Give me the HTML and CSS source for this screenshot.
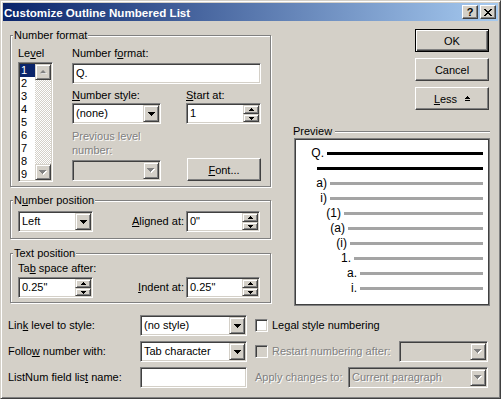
FILE: index.html
```html
<!DOCTYPE html>
<html lang="en">
<head>
    <meta charset="UTF-8">
    <meta name="viewport" content="width=device-width, initial-scale=1.0">
    <link rel="stylesheet" href="styles.css">
    <title>Customize Outline Numbered List</title>
</head>
<body>

<div class="window">
    <div class="titlebar">
        <span class="title">Customize Outline Numbered List</span>
        <span class="cbtn help">?</span>
        <span class="cbtn close">
            <svg width="8" height="7" viewBox="0 0 8 7"><path d="M0 0h2v1H0zM6 0h2v1H6zM1 1h2v1H1zM5 1h2v1H5zM2 2h4v1H2zM3 3h2v1H3zM2 4h4v1H2zM1 5h2v1H1zM5 5h2v1H5zM0 6h2v1H0zM6 6h2v1H6z" fill="#000"/></svg>
        </span>
    </div>

    <div class="top">
        <div class="left">

            <div class="group nf">
                <div class="group-title">Number format</div>
                <div class="nf-body">
                    <div class="level-col">
                        <div class="lbl">Le<u>v</u>el</div>
                        <div class="listbox sunken">
                            <div class="items">
                                <div class="item sel">1</div>
                                <div class="item">2</div>
                                <div class="item">3</div>
                                <div class="item">4</div>
                                <div class="item">5</div>
                                <div class="item">6</div>
                                <div class="item">7</div>
                                <div class="item">8</div>
                                <div class="item">9</div>
                            </div>
                            <div class="vscroll">
                                <div class="raised sbtn">
                                    <svg width="7" height="4" viewBox="0 0 8 5"><path d="M4 1h1v1H4zM3 2h3v1H3zM2 3h5v1H2zM1 4h7v1H1z" fill="#fff"/><path d="M3 0h1v1H3zM2 1h3v1H2zM1 2h5v1H1zM0 3h7v1H0z" fill="#808080"/></svg>
                                </div>
                                <div class="track"></div>
                                <div class="raised sbtn">
                                    <svg width="8" height="5" viewBox="0 0 8 5"><path d="M1 1h7v1H1zM2 2h5v1H2zM3 3h3v1H3zM4 4h1v1H4z" fill="#fff"/><path d="M0 0h7v1H0zM1 1h5v1H1zM2 2h3v1H2zM3 3h1v1H3z" fill="#808080"/></svg>
                                </div>
                            </div>
                        </div>
                    </div>

                    <div class="fmt-col">
                        <div class="lbl">Number f<u>o</u>rmat:</div>
                        <div class="textbox sunken fmt-input">Q.</div>

                        <div class="pair style-row">
                            <div>
                                <div class="lbl"><u>N</u>umber style:</div>
                                <div class="combo sunken w89">
                                    <span class="val">(none)</span>
                                    <span class="raised drop"><svg width="7" height="4" viewBox="0 0 7 4"><path d="M0 0h7v1H0zM1 1h5v1H1zM2 2h3v1H2zM3 3h1v1H3z" fill="#000"/></svg></span>
                                </div>
                            </div>
                            <div>
                                <div class="lbl"><u>S</u>tart at:</div>
                                <div class="spin sunken w75">
                                    <span class="val">1</span>
                                    <span class="spinbtns">
                                        <span class="raised up"><svg width="5" height="3" viewBox="0 0 5 3"><path d="M2 0h1v1H2zM1 1h3v1H1zM0 2h5v1H0z" fill="#000"/></svg></span>
                                        <span class="raised down"><svg width="5" height="3" viewBox="0 0 5 3"><path d="M0 0h5v1H0zM1 1h3v1H1zM2 2h1v1H2z" fill="#000"/></svg></span>
                                    </span>
                                </div>
                            </div>
                        </div>

                        <div class="pair prev-row">
                            <div>
                                <div class="lbl dis prev-lbl">Previous level<br>number:</div>
                                <div class="combo sunken off w89">
                                    <span class="val"></span>
                                    <span class="raised drop"><svg width="8" height="5" viewBox="0 0 8 5"><path d="M1 1h7v1H1zM2 2h5v1H2zM3 3h3v1H3zM4 4h1v1H4z" fill="#fff"/><path d="M0 0h7v1H0zM1 1h5v1H1zM2 2h3v1H2zM3 3h1v1H3z" fill="#808080"/></svg></span>
                                </div>
                            </div>
                            <div class="btn font-btn"><u>F</u>ont...</div>
                        </div>
                    </div>
                </div>
            </div>

            <div class="group np">
                <div class="group-title">N<u>u</u>mber position</div>
                <div class="np-body">
                    <div class="combo sunken w75">
                        <span class="val">Left</span>
                        <span class="raised drop"><svg width="7" height="4" viewBox="0 0 7 4"><path d="M0 0h7v1H0zM1 1h5v1H1zM2 2h3v1H2zM3 3h1v1H3z" fill="#000"/></svg></span>
                    </div>
                    <span class="lbl push"><u>A</u>ligned at:</span>
                    <div class="spin sunken w74">
                        <span class="val">0"</span>
                        <span class="spinbtns">
                            <span class="raised up"><svg width="5" height="3" viewBox="0 0 5 3"><path d="M2 0h1v1H2zM1 1h3v1H1zM0 2h5v1H0z" fill="#000"/></svg></span>
                            <span class="raised down"><svg width="5" height="3" viewBox="0 0 5 3"><path d="M0 0h5v1H0zM1 1h3v1H1zM2 2h1v1H2z" fill="#000"/></svg></span>
                        </span>
                    </div>
                </div>
            </div>

            <div class="group tp">
                <div class="group-title">Text position</div>
                <div class="tp-body">
                    <div class="lbl">Ta<u>b</u> space after:</div>
                    <div class="tp-row">
                        <div class="spin sunken w75">
                            <span class="val">0.25"</span>
                            <span class="spinbtns">
                                <span class="raised up"><svg width="5" height="3" viewBox="0 0 5 3"><path d="M2 0h1v1H2zM1 1h3v1H1zM0 2h5v1H0z" fill="#000"/></svg></span>
                                <span class="raised down"><svg width="5" height="3" viewBox="0 0 5 3"><path d="M0 0h5v1H0zM1 1h3v1H1zM2 2h1v1H2z" fill="#000"/></svg></span>
                            </span>
                        </div>
                        <span class="lbl push"><u>I</u>ndent at:</span>
                        <div class="spin sunken w74">
                            <span class="val">0.25"</span>
                            <span class="spinbtns">
                                <span class="raised up"><svg width="5" height="3" viewBox="0 0 5 3"><path d="M2 0h1v1H2zM1 1h3v1H1zM0 2h5v1H0z" fill="#000"/></svg></span>
                                <span class="raised down"><svg width="5" height="3" viewBox="0 0 5 3"><path d="M0 0h5v1H0zM1 1h3v1H1zM2 2h1v1H2z" fill="#000"/></svg></span>
                            </span>
                        </div>
                    </div>
                </div>
            </div>

        </div>

        <div class="right">
            <div class="btns">
                <div class="btn default">OK</div>
                <div class="btn">Cancel</div>
                <div class="btn"><u>L</u>ess <svg class="less-ico" width="5" height="5" viewBox="0 0 5 5"><path d="M2 0h1v1H2zM1 1h3v1H1zM0 2h5v1H0zM0 4h5v1H0z" fill="#000"/></svg></div>
            </div>

            <div class="preview-head">
                <span>Preview</span>
                <span class="etch"></span>
            </div>
            <div class="preview">
                <div class="prow lv1"><span class="num">Q.</span><span class="bar black"></span></div>
                <div class="prow lv1b"><span class="num"></span><span class="bar black"></span></div>
                <div class="prow lv2"><span class="num">a)</span><span class="bar"></span></div>
                <div class="prow lv3"><span class="num">i)</span><span class="bar"></span></div>
                <div class="prow lv4"><span class="num">(1)</span><span class="bar"></span></div>
                <div class="prow lv5"><span class="num">(a)</span><span class="bar"></span></div>
                <div class="prow lv6"><span class="num">(i)</span><span class="bar"></span></div>
                <div class="prow lv7"><span class="num">1.</span><span class="bar"></span></div>
                <div class="prow lv8"><span class="num">a.</span><span class="bar"></span></div>
                <div class="prow lv9"><span class="num">i.</span><span class="bar"></span></div>
            </div>
        </div>
    </div>

    <div class="bottom">
        <span class="lbl">Lin<u>k</u> level to style:</span>
        <div class="combo sunken w107">
            <span class="val">(no style)</span>
            <span class="raised drop"><svg width="7" height="4" viewBox="0 0 7 4"><path d="M0 0h7v1H0zM1 1h5v1H1zM2 2h3v1H2zM3 3h1v1H3z" fill="#000"/></svg></span>
        </div>
        <div class="cell">
            <span class="check sunken"></span>
            <span class="lbl">Le<u>g</u>al style numbering</span>
        </div>

        <span class="lbl">Follo<u>w</u> number with:</span>
        <div class="combo sunken w107">
            <span class="val">Tab character</span>
            <span class="raised drop"><svg width="7" height="4" viewBox="0 0 7 4"><path d="M0 0h7v1H0zM1 1h5v1H1zM2 2h3v1H2zM3 3h1v1H3z" fill="#000"/></svg></span>
        </div>
        <div class="cell">
            <span class="check sunken off"></span>
            <span class="lbl dis">Restart numbering after:</span>
            <div class="combo sunken off w89 push">
                <span class="val"></span>
                <span class="raised drop"><svg width="8" height="5" viewBox="0 0 8 5"><path d="M1 1h7v1H1zM2 2h5v1H2zM3 3h3v1H3zM4 4h1v1H4z" fill="#fff"/><path d="M0 0h7v1H0zM1 1h5v1H1zM2 2h3v1H2zM3 3h1v1H3z" fill="#808080"/></svg></span>
            </div>
        </div>

        <span class="lbl">ListNum field lis<u>t</u> name:</span>
        <div class="textbox sunken w107"></div>
        <div class="cell">
            <span class="lbl dis">Apply changes to:</span>
            <div class="combo sunken off w140 push">
                <span class="val dis">Current paragraph</span>
                <span class="raised drop"><svg width="8" height="5" viewBox="0 0 8 5"><path d="M1 1h7v1H1zM2 2h5v1H2zM3 3h3v1H3zM4 4h1v1H4z" fill="#fff"/><path d="M0 0h7v1H0zM1 1h5v1H1zM2 2h3v1H2zM3 3h1v1H3z" fill="#808080"/></svg></span>
            </div>
        </div>
    </div>
</div>

</body>
</html>
```

FILE: styles.css
```css
* {
    box-sizing: border-box;
}
body {
    margin: 0;
    background-color: #d4d0c8;
    font-family: "Liberation Sans", Arial, sans-serif;
    font-size: 11px;
    color: #000;
}
u {
    text-decoration-thickness: 1px;
    text-underline-offset: 1px;
}

/* janela */
.window {
    width: 501px;
    height: 399px;
    padding: 2px;
    background-color: #d4d0c8;
    border: 1px solid;
    border-color: #d4d0c8 #404040 #404040 #d4d0c8;
    box-shadow: inset 1px 1px 0 #fff, inset -1px -1px 0 #808080;
}
.titlebar {
    height: 18px;
    display: flex;
    align-items: center;
    padding: 0 2px 0 1px;
    background: linear-gradient(to right, #0a246a, #a6caf0);
}
.title {
    flex: 1;
    color: #fff;
    font-weight: 700;
    font-size: 11.6px;
}
.cbtn {
    width: 16px;
    height: 14px;
    display: flex;
    align-items: center;
    justify-content: center;
    background-color: #d4d0c8;
    border: 1px solid;
    border-color: #fff #404040 #404040 #fff;
    box-shadow: inset -1px -1px 0 #808080;
    font-weight: 700;
    font-size: 11px;
    line-height: 12px;
}
.help {
    margin-right: 2px;
}

/* relevos */
.sunken {
    background-color: #fff;
    border: 1px solid;
    border-color: #808080 #fff #fff #808080;
    box-shadow: inset 1px 1px 0 #404040, inset -1px -1px 0 #d4d0c8;
    padding: 1px;
}
.sunken.off {
    background-color: #d4d0c8;
}
.raised {
    display: flex;
    align-items: center;
    justify-content: center;
    background-color: #d4d0c8;
    border: 1px solid;
    border-color: #d4d0c8 #404040 #404040 #d4d0c8;
    box-shadow: inset 1px 1px 0 #fff, inset -1px -1px 0 #808080;
}
.btn {
    display: flex;
    align-items: center;
    justify-content: center;
    width: 74px;
    height: 23px;
    background-color: #d4d0c8;
    border: 1px solid;
    border-color: #fff #404040 #404040 #fff;
    box-shadow: inset -1px -1px 0 #808080;
}
.btn.default {
    border-color: #000;
    box-shadow: inset 1px 1px 0 #fff, inset -1px -1px 0 #404040, inset -2px -2px 0 #808080;
}
.less-ico {
    margin-left: 8px;
    margin-bottom: 1px;
}

.lbl {
    line-height: 13px;
    white-space: nowrap;
}
.dis {
    color: #808080;
    text-shadow: 1px 1px 0 #fff;
}
.push {
    margin-left: auto;
}

/* grupos */
.top {
    display: flex;
    align-items: flex-start;
}
.left {
    width: 261px;
    margin: 14px 0 0 7px;
}
.right {
    width: 197px;
    margin: 8px 0 0 22px;
}
.group {
    border: 1px solid #808080;
    box-shadow: inset 1px 1px 0 #fff, 1px 1px 0 #fff;
}
.group-title {
    display: table;
    margin: -7px 0 0 2px;
    padding: 0 1px;
    line-height: 13px;
    background-color: #d4d0c8;
}
.np {
    margin-top: 13px;
}
.tp {
    margin-top: 14px;
}

.nf-body {
    display: flex;
    align-items: flex-start;
    padding: 5px 9px 4px 7px;
}
.level-col {
    width: 35px;
}
.listbox {
    display: flex;
    height: 120px;
    margin-top: 2px;
    overflow: hidden;
}
.items {
    width: 15px;
}
.item {
    height: 13px;
    line-height: 13px;
    padding-left: 1px;
}
.item.sel {
    background-color: #0a246a;
    color: #fff;
}
.vscroll {
    width: 16px;
    display: flex;
    flex-direction: column;
}
.sbtn {
    height: 16px;
}
.track {
    flex: 1;
    background: repeating-conic-gradient(#fff 0 25%, #d4d0c8 0 50%) 0 0 / 2px 2px;
}

.fmt-col {
    width: 189px;
    margin-left: 19px;
}
.fmt-input {
    margin-top: 3px;
}
.textbox {
    height: 21px;
    line-height: 17px;
    padding-left: 3px;
}
.pair {
    display: flex;
    justify-content: space-between;
    align-items: flex-end;
}
.style-row {
    margin-top: 5px;
}
.style-row .lbl {
    margin-bottom: 1px;
}
.prev-row {
    margin-top: 5px;
}
.prev-lbl {
    line-height: 14px;
    margin-bottom: 3px;
}

.combo, .spin {
    display: flex;
    height: 21px;
}
.combo .val, .spin .val {
    flex: 1;
    line-height: 17px;
    padding-left: 2px;
    white-space: nowrap;
    overflow: hidden;
}
.drop {
    width: 16px;
}
.spinbtns {
    width: 16px;
    display: flex;
    flex-direction: column;
}
.spinbtns .up {
    height: 9px;
}
.spinbtns .down {
    height: 8px;
}
.w74 { width: 74px; }
.w75 { width: 75px; }
.w89 { width: 89px; }
.w107 { width: 107px; }
.w140 { width: 140px; }

.np-body {
    display: flex;
    align-items: center;
    padding: 4px 10px 6px 7px;
}
.np-body .lbl, .tp-row .lbl {
    margin-right: 2px;
}
.tp-body {
    padding: 2px 10px 4px 7px;
}
.tp-row {
    display: flex;
    align-items: center;
    margin-top: 2px;
}

/* coluna da direita */
.btns {
    display: flex;
    flex-direction: column;
    align-items: flex-end;
    gap: 6px;
    padding-right: 1px;
}
.preview-head {
    display: flex;
    align-items: center;
    margin-top: 15px;
    line-height: 13px;
}
.etch {
    flex: 1;
    height: 2px;
    margin-left: 3px;
    border-top: 1px solid #808080;
    border-bottom: 1px solid #fff;
}
.preview {
    width: 196px;
    height: 168px;
    margin-left: 1px;
    background-color: #fff;
    border: 1px solid #000;
    box-shadow: inset 0 0 0 1px #404040;
    outline: 1px solid #808080;
    outline-offset: -1px;
    padding: 7px 6px 0 2px;
    font-size: 12px;
}
.prow {
    display: flex;
    align-items: center;
    height: 15px;
}
.num {
    text-align: right;
    padding-right: 3px;
    line-height: 15px;
}
.bar {
    flex: 1;
    height: 3px;
    background-color: #a4a4a4;
}
.bar.black {
    background-color: #000;
}
.lv1 .num { width: 30px; }
.lv1b .num { width: 20px; }
.lv2 .num { width: 33px; }
.lv3 .num { width: 33px; }
.lv4 .num { width: 47px; }
.lv5 .num { width: 51px; }
.lv6 .num { width: 53px; }
.lv7 .num { width: 57px; }
.lv8 .num { width: 63px; }
.lv9 .num { width: 63px; }

/* parte de baixo */
.bottom {
    display: grid;
    grid-template-columns: 132px 107px 241px;
    grid-auto-rows: 21px;
    row-gap: 5px;
    margin: 9px 0 0 5px;
    align-items: center;
}
.cell {
    display: flex;
    align-items: center;
    padding-left: 8px;
    height: 21px;
}
.check {
    width: 13px;
    height: 13px;
    margin-right: 4px;
}
```
